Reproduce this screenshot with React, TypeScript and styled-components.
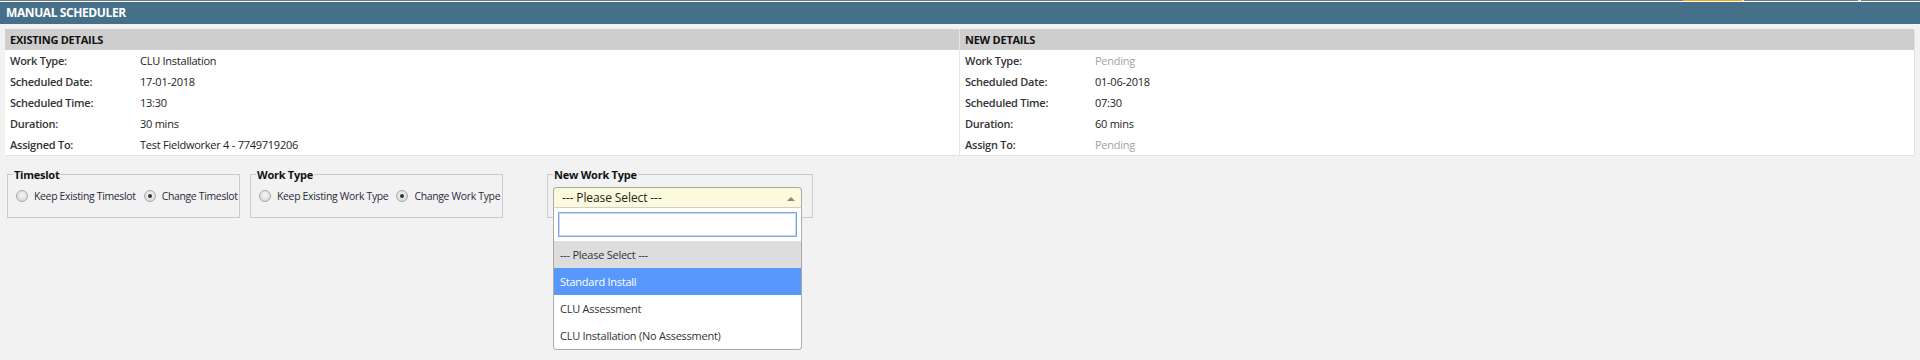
import React from 'react';
import styled, { createGlobalStyle } from 'styled-components';

const GlobalStyle = createGlobalStyle`
  html, body {
    margin: 0;
    background: #f2f2f2;
  }
  body {
    font-family: "Open Sans", "Noto Sans", sans-serif;
    font-size: 11px;
    letter-spacing: -0.25px;
    color: #222;
  }
`;

const Shell = styled.div`
  min-height: 100vh;
  background: #f2f2f2;
`;

const TopStrip = styled.div`
  display: flex;
  height: 1px;
  background: #6b7a85;
  border-bottom: 1px solid #ffffff;
`;

const StripSeg = styled.div<{ $w: number; $color: string }>`
  width: ${(p) => p.$w}px;
  background: ${(p) => p.$color};
`;

const Header = styled.div`
  height: 22px;
  background: #467089;
  color: #fff;
  font-weight: 700;
  font-size: 12px;
  line-height: 22px;
  padding-left: 6px;
  letter-spacing: -0.4px;
`;

const Page = styled.div`
  padding: 5px 6px 0 5px;
`;

const DetailsTable = styled.div`
  display: grid;
  grid-template-columns: 954px 1fr;
  background: #fff;
  box-shadow: 1px 1px 0 #e2e2e2;
`;

const Column = styled.div<{ $divider?: boolean }>`
  border-left: ${(p) => (p.$divider ? '1px solid #e6e6e6' : 'none')};
`;

const ColumnHead = styled.div`
  height: 21px;
  line-height: 21px;
  background: #cecece;
  font-weight: 700;
  padding-left: 5px;
  color: #111;
`;

const Row = styled.div`
  display: grid;
  grid-template-columns: 130px 1fr;
  height: 21px;
  line-height: 21px;
  padding-left: 5px;
`;

const Label = styled.span`
  font-weight: 600;
  color: #333;
`;

const Value = styled.span<{ $muted?: boolean }>`
  color: ${(p) => (p.$muted ? '#a3a3a3' : '#222')};
`;

const Options = styled.div`
  display: flex;
  align-items: flex-start;
  padding: 19px 0 0 2px;
`;

const GroupBox = styled.div<{ $w: number; $ml?: number }>`
  display: flex;
  flex-direction: column;
  width: ${(p) => p.$w}px;
  margin-left: ${(p) => p.$ml || 0}px;
  box-sizing: border-box;
  border: 1px solid #cbcbcb;
`;

const GroupTitle = styled.div`
  align-self: flex-start;
  margin: -6px 0 0 5px;
  padding: 0 1px;
  background: #f2f2f2;
  font-weight: 700;
  color: #111;
  line-height: 12px;
`;

const GroupBody = styled.div<{ $pt: number; $pl: number }>`
  display: flex;
  align-items: flex-start;
  height: 36px;
  box-sizing: border-box;
  padding: ${(p) => p.$pt}px 0 0 ${(p) => p.$pl}px;
`;

const RadioItem = styled.label`
  display: flex;
  align-items: center;
  gap: 6px;
  margin-right: 8px;
  color: #2a2a3a;
  font-size: 10.4px;
  letter-spacing: -0.3px;
  line-height: 16px;
  white-space: nowrap;
`;

const RadioDot = styled.span<{ $checked?: boolean }>`
  width: 10px;
  height: 10px;
  border-radius: 50%;
  border: 1px solid #a8a8a8;
  background: radial-gradient(circle at 50% 40%, #f6f6f6, #d2d2d2);
  display: flex;
  align-items: center;
  justify-content: center;
  &::after {
    content: '';
    width: 4px;
    height: 4px;
    border-radius: 50%;
    background: #333;
    display: ${(p) => (p.$checked ? 'block' : 'none')};
  }
`;

const SelectWrap = styled.div`
  position: relative;
  width: 249px;
`;

const SelectBox = styled.div`
  height: 21px;
  box-sizing: border-box;
  background: #fcfadc;
  border: 1px solid #aaa;
  border-bottom-color: #cfcfcf;
  border-radius: 4px 4px 0 0;
  display: flex;
  align-items: center;
  justify-content: space-between;
  padding: 0 6px 0 8px;
  color: #222;
  font-size: 12px;
  letter-spacing: -0.1px;
`;

const Arrow = styled.span`
  width: 0;
  height: 0;
  border-left: 4px solid transparent;
  border-right: 4px solid transparent;
  border-bottom: 4px solid #888;
  margin-top: 3px;
`;

const Dropdown = styled.div`
  position: absolute;
  top: 21px;
  left: 0;
  right: 0;
  background: #fff;
  border: 1px solid #aaa;
  border-top: none;
  border-radius: 0 0 4px 4px;
  box-sizing: border-box;
  z-index: 2;
`;

const SearchRow = styled.div`
  padding: 4px;
`;

const SearchInput = styled.input`
  display: block;
  width: 100%;
  height: 25px;
  box-sizing: border-box;
  border: 1px solid #7fa4e6;
  box-shadow: inset 0 0 0 1px #c9d9f6;
  outline: none;
  font: inherit;
`;

const Option = styled.div<{ $state?: 'selected' | 'highlighted' }>`
  height: 27px;
  line-height: 27px;
  padding-left: 6px;
  background: ${(p) =>
    p.$state === 'selected' ? '#dddddd' : p.$state === 'highlighted' ? '#5897fb' : '#fff'};
  color: ${(p) => (p.$state === 'highlighted' ? '#fff' : '#333')};
  &:last-child {
    border-radius: 0 0 4px 4px;
  }
`;

const existing = [
  ['Work Type:', 'CLU Installation'],
  ['Scheduled Date:', '17-01-2018'],
  ['Scheduled Time:', '13:30'],
  ['Duration:', '30 mins'],
  ['Assigned To:', 'Test Fieldworker 4 - 7749719206'],
];

const updated: [string, string, boolean?][] = [
  ['Work Type:', 'Pending', true],
  ['Scheduled Date:', '01-06-2018'],
  ['Scheduled Time:', '07:30'],
  ['Duration:', '60 mins'],
  ['Assign To:', 'Pending', true],
];

const workTypes = ['--- Please Select ---', 'Standard Install', 'CLU Assessment', 'CLU Installation (No Assessment)'];

function App() {
  return (
    <Shell>
      <GlobalStyle />
      <TopStrip>
        <StripSeg $w={1683} $color="#6b7a85" />
        <StripSeg $w={59} $color="#f5a31a" />
        <StripSeg $w={2} $color="#e6e6e6" />
        <StripSeg $w={114} $color="#6b7a85" />
        <StripSeg $w={3} $color="#e6e6e6" />
        <StripSeg $w={59} $color="#6b7a85" />
      </TopStrip>
      <Header>MANUAL SCHEDULER</Header>
      <Page>
        <DetailsTable>
          <Column>
            <ColumnHead>EXISTING DETAILS</ColumnHead>
            {existing.map(([l, v]) => (
              <Row key={l}>
                <Label>{l}</Label>
                <Value>{v}</Value>
              </Row>
            ))}
          </Column>
          <Column $divider>
            <ColumnHead>NEW DETAILS</ColumnHead>
            {updated.map(([l, v, muted]) => (
              <Row key={l}>
                <Label>{l}</Label>
                <Value $muted={muted}>{v}</Value>
              </Row>
            ))}
          </Column>
        </DetailsTable>
        <Options>
          <GroupBox $w={233}>
            <GroupTitle>Timeslot</GroupTitle>
            <GroupBody $pt={7} $pl={8}>
              <RadioItem>
                <RadioDot />
                Keep Existing Timeslot
              </RadioItem>
              <RadioItem>
                <RadioDot $checked />
                Change Timeslot
              </RadioItem>
            </GroupBody>
          </GroupBox>
          <GroupBox $w={253} $ml={10}>
            <GroupTitle>Work Type</GroupTitle>
            <GroupBody $pt={7} $pl={8}>
              <RadioItem>
                <RadioDot />
                Keep Existing Work Type
              </RadioItem>
              <RadioItem>
                <RadioDot $checked />
                Change Work Type
              </RadioItem>
            </GroupBody>
          </GroupBox>
          <GroupBox $w={266} $ml={44}>
            <GroupTitle>New Work Type</GroupTitle>
            <GroupBody $pt={6} $pl={5}>
              <SelectWrap>
                <SelectBox>
                  --- Please Select ---
                  <Arrow />
                </SelectBox>
                <Dropdown>
                  <SearchRow>
                    <SearchInput />
                  </SearchRow>
                  {workTypes.map((w, i) => (
                    <Option key={w} $state={i === 0 ? 'selected' : i === 1 ? 'highlighted' : undefined}>
                      {w}
                    </Option>
                  ))}
                </Dropdown>
              </SelectWrap>
            </GroupBody>
          </GroupBox>
        </Options>
      </Page>
    </Shell>
  );
}

export default App;
